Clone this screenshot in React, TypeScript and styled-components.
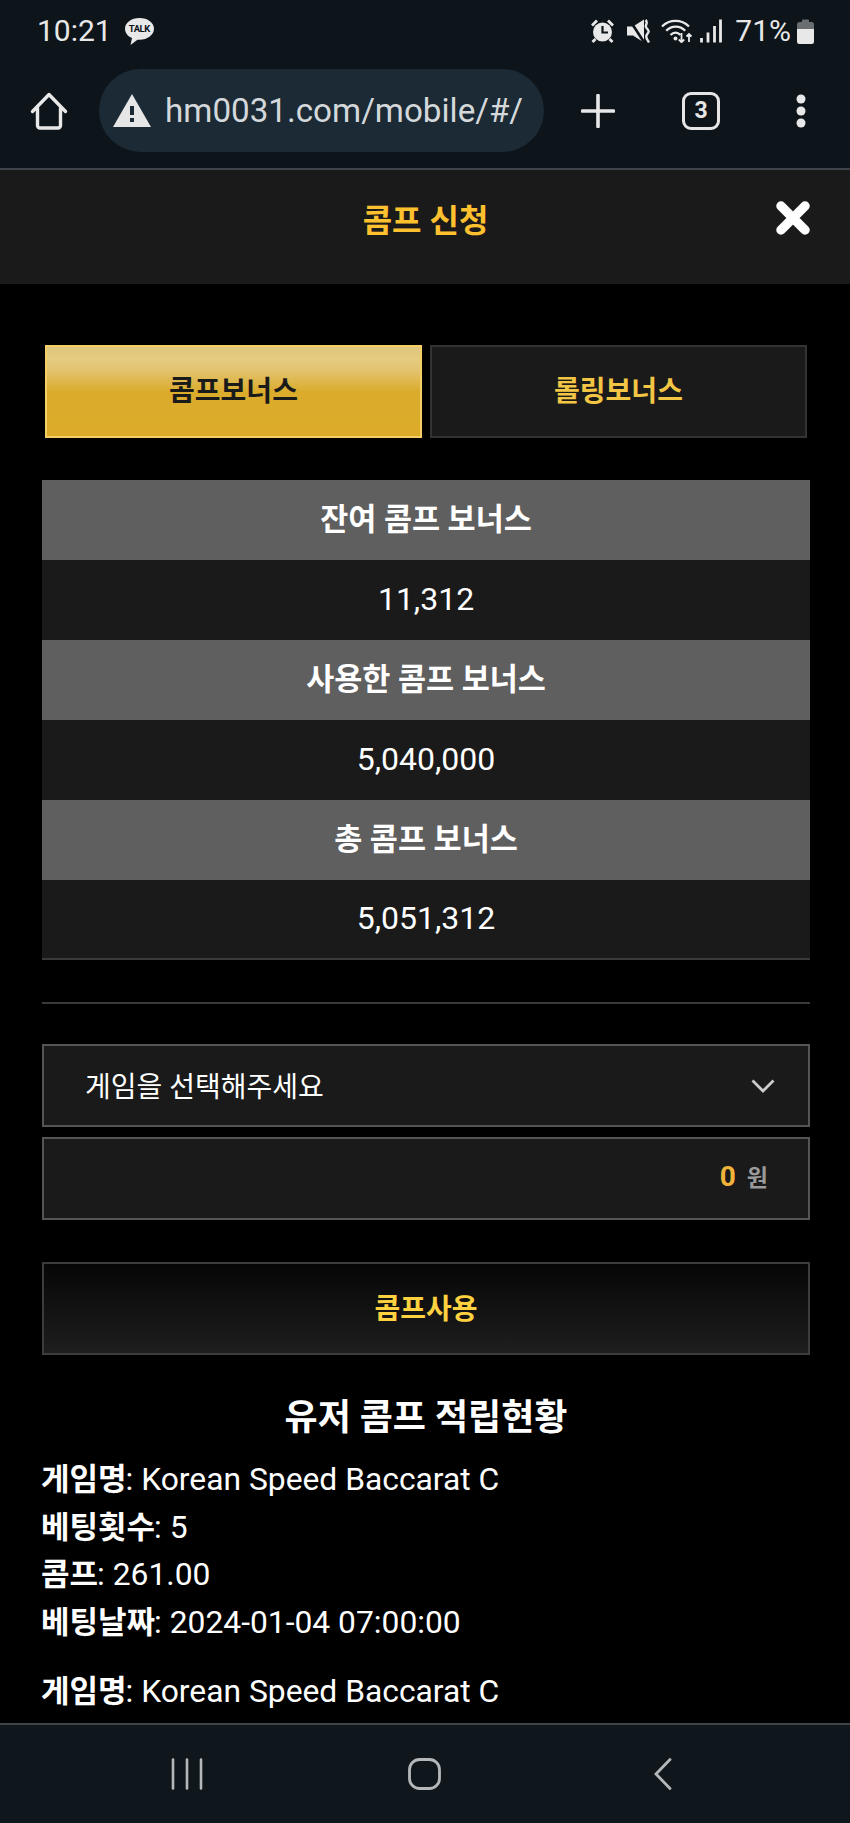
import React from 'react';
import styled, { createGlobalStyle } from 'styled-components';

const FONT = `Roboto, "Noto Sans CJK KR", "Noto Sans", sans-serif`;

const Global = createGlobalStyle`
  html, body { margin: 0; padding: 0; background: #000; }
  body { font-family: ${FONT}; }
  * { box-sizing: border-box; }
`;

const Page = styled.div`
  width: 850px;
  height: 1823px;
  display: flex;
  flex-direction: column;
  overflow: hidden;
  background: #000;
`;

const Chrome = styled.header`
  height: 170px;
  flex: none;
  background: #0d141a;
  border-bottom: 2px solid #3f444a;
  display: flex;
  flex-direction: column;
`;

const StatusBar = styled.div`
  height: 69px;
  padding: 10px 36px 0 37px;
  display: flex;
  align-items: flex-start;
  justify-content: space-between;
  color: #e8e8e8;
`;

const StatusGroup = styled.div`
  display: flex;
  align-items: center;
  height: 42px;
`;

const Clock = styled.span`
  font-size: 30px;
  line-height: 42px;
  margin-right: 12px;
`;

const TalkBubble = styled.span`
  position: relative;
  display: inline-block;
  width: 31px;
  height: 29px;
`;

const TalkLabel = styled.span`
  position: absolute;
  left: 0;
  right: 0;
  top: 6px;
  text-align: center;
  font-size: 9.500px;
  line-height: 11px;
  font-weight: 700;
  letter-spacing: -0.5px;
  color: #0d141a;
`;

const Battery = styled.span`
  font-size: 30px;
  line-height: 42px;
  margin: 0 6px 0 13px;
`;

const StatusIcon = styled.svg<{ $gap?: number }>`
  display: block;
  flex: none;
  margin-left: ${(p) => p.$gap ?? 0}px;
`;

const BrowserBar = styled.div`
  height: 83px;
  display: flex;
  align-items: center;
`;

const HomeSlot = styled.div`
  width: 99px;
  flex: none;
  display: flex;
  justify-content: center;
  padding-right: 1px;
`;

const UrlPill = styled.div`
  width: 445px;
  height: 83px;
  flex: none;
  border-radius: 42px;
  background: #1b2a35;
  display: flex;
  align-items: center;
  padding-left: 14px;
  gap: 14px;
`;

const UrlText = styled.span`
  font-size: 33.200px;
  line-height: 40px;
  color: #d4d8da;
  white-space: nowrap;
`;

const BrowserActions = styled.div`
  flex: 1;
  display: grid;
  grid-template-columns: 107px 100px 99px;
  justify-items: center;
  align-items: center;
`;

const TabCount = styled.span`
  width: 38px;
  height: 38px;
  border: 3.500px solid #e6e6e6;
  border-radius: 9px;
  display: flex;
  align-items: center;
  justify-content: center;
  font-size: 23px;
  font-weight: 700;
  color: #e6e6e6;
`;

const Main = styled.main`
  flex: 1;
  min-height: 0;
  overflow: hidden;
  background: #000;
`;

const ModalHeader = styled.div`
  position: relative;
  height: 114px;
  background: #1a1a1a;
  display: flex;
  justify-content: center;
  padding: 30px 0 0 1px;
`;

const ModalTitle = styled.h1`
  margin: 0;
  font-size: 32px;
  line-height: 42px;
  font-weight: 700;
  color: #fdc02f;
`;

const CloseButton = styled.svg`
  position: absolute;
  right: 39px;
  top: 30px;
`;

const Content = styled.div`
  padding: 61px 40px 0 42px;
`;

const Tabs = styled.div`
  display: grid;
  grid-template-columns: 377px 377px;
  gap: 8px;
  margin: 0 4px 0 3px;
`;

const Tab = styled.button<{ $active?: boolean }>`
  height: 93px;
  padding: 0 0 6px;
  font-family: ${FONT};
  font-size: 28px;
  font-weight: 700;
  border: 2px solid ${(p) => (p.$active ? '#f5cf66' : '#333333')};
  color: ${(p) => (p.$active ? '#1a1a1a' : '#f3c544')};
  background: ${(p) =>
    p.$active
      ? 'linear-gradient(to bottom, #dfc67e 0%, #e6cc80 14%, #e2c36f 26%, #dbac2c 50%, #dbab29 100%)'
      : '#1a1a1a'};
`;

const Summary = styled.section`
  margin-top: 42px;
`;

const SummaryHead = styled.div`
  height: 80px;
  padding-bottom: 7px;
  background: #5f5f5f;
  color: #fff;
  font-size: 30.500px;
  font-weight: 700;
  display: flex;
  align-items: center;
  justify-content: center;
`;

const SummaryValue = styled.div`
  height: 80px;
  padding-bottom: 3px;
  background: #1a1a1a;
  color: #fff;
  font-size: 32px;
  display: flex;
  align-items: center;
  justify-content: center;

  &:last-child {
    border-bottom: 2px solid #3a3a3a;
  }
`;

const Divider = styled.hr`
  margin: 42px 0 40px;
  border: 0;
  border-top: 2px solid #3a3a3a;
`;

const FieldBox = styled.div`
  height: 83px;
  background: #1a1a1a;
  border: 2px solid #555;
  display: flex;
  align-items: center;
`;

const SelectBox = styled(FieldBox)`
  justify-content: space-between;
  padding: 0 33px 0 41px;
  color: #fff;
  font-size: 28px;
`;

const SelectLabel = styled.span`
  margin-bottom: 2px;
`;

const AmountBox = styled(FieldBox)`
  margin-top: 10px;
  justify-content: flex-end;
  padding: 0 40px 5px 0;
  gap: 11px;
`;

const AmountValue = styled.span`
  font-size: 28px;
  font-weight: 700;
  color: #f0b43a;
`;

const AmountUnit = styled.span`
  font-size: 23px;
  font-weight: 700;
  color: #9a9a9a;
`;

const SubmitButton = styled.button`
  display: block;
  width: 100%;
  height: 93px;
  margin-top: 42px;
  padding: 0 0 4px;
  border: 2px solid #3c3c3c;
  background: linear-gradient(to bottom, #060606, #1e1e1e);
  color: #fdd13f;
  font-family: ${FONT};
  font-size: 28px;
  font-weight: 700;
`;

const HistoryTitle = styled.h2`
  margin: 39px 0 14px;
  text-align: center;
  font-size: 36px;
  line-height: 48px;
  font-weight: 700;
  color: #fff;
`;

const HistoryEntry = styled.div`
  margin-bottom: 21px;
  color: #fff;
  font-size: 31.800px;
  line-height: 47.700px;
`;

const HistoryLine = styled.div`
  height: 47.700px;
  margin-left: -1px;
  white-space: nowrap;
`;

const HistoryLabel = styled.b`
  font-size: 31px;
  font-weight: 700;
  margin-right: -1px;
`;

const NavBar = styled.nav`
  height: 100px;
  flex: none;
  background: #0f161c;
  border-top: 2px solid #3f444a;
  display: flex;
  align-items: flex-start;
  padding: 33px 0 0 171px;
`;

const NavIcon = styled.svg<{ $gap?: number }>`
  display: block;
  flex: none;
  margin-left: ${(p) => p.$gap ?? 0}px;
`;

const firstEntry = [
  ['게임명', 'Korean Speed Baccarat C'],
  ['베팅횟수', '5'],
  ['콤프', '261.00'],
  ['베팅날짜', '2024-01-04 07:00:00'],
];

const secondEntry = [['게임명', 'Korean Speed Baccarat C']];

const summary = [
  ['잔여 콤프 보너스', '11,312'],
  ['사용한 콤프 보너스', '5,040,000'],
  ['총 콤프 보너스', '5,051,312'],
];

export default function App() {
  return (
    <Page>
      <Global />
      <Chrome>
        <StatusBar>
          <StatusGroup>
            <Clock>10:21</Clock>
            <TalkBubble>
              <svg width="31" height="29" viewBox="0 0 31 29">
                <path d="M15.500 1C7.200 1 1 5.800 1 11.800c0 4.100 2.800 7.500 7 9.300L6.500 28l7-5.300c.7.100 1.300.1 2 .1C23.800 22.800 30 17.800 30 11.800S23.800 1 15.500 1z" fill="#e8e8e8" />
              </svg>
              <TalkLabel>TALK</TalkLabel>
            </TalkBubble>
          </StatusGroup>
          <StatusGroup>
            <StatusIcon width="23" height="24" viewBox="0 0 23 24">
              <circle cx="11.500" cy="13" r="9.500" fill="#e8e8e8" />
              <path d="M11.500 7v6.500h5.500" fill="none" stroke="#0d141a" strokeWidth="2.200" />
              <path d="M1 6.500L6 1.500M22 6.500l-5-5M4.500 20l-3 3M18.500 20l3 3" stroke="#e8e8e8" strokeWidth="2.800" />
            </StatusIcon>
            <StatusIcon $gap={13} width="23" height="24" viewBox="0 0 23 24">
              <path d="M0 7.500h6L17 .5v23L6 16.500H0z" fill="#e8e8e8" />
              <path d="M2 0l15.500 24" stroke="#0d141a" strokeWidth="2.600" />
              <path d="M18.500 1c3.500 3-1.500 5.500 1 8s3 3.500.500 6.500 1 5.500 2 8" fill="none" stroke="#e8e8e8" strokeWidth="2.400" />
            </StatusIcon>
            <StatusIcon $gap={11} width="32" height="24" viewBox="0 0 32 24">
              <path d="M1 7.500c7.500-7.500 19.500-7.500 27 0M5.200 11.800c5.500-5.500 13.600-5.500 19 0M9.500 16c3-3 7-3 10 0" fill="none" stroke="#e8e8e8" strokeWidth="2.300" />
              <circle cx="14.500" cy="19.500" r="2" fill="#e8e8e8" />
              <path d="M20.500 14v9M17.800 20.500l2.700 2.700 2.700-2.700M28 23v-8M25.500 17.500l2.500-2.500 2.500 2.500" fill="none" stroke="#e8e8e8" strokeWidth="1.800" />
            </StatusIcon>
            <StatusIcon $gap={7} width="22" height="24" viewBox="0 0 22 24">
              <path d="M1.500 19v4.500M8 13.500v10M14.500 7v16.500M20.500.5v23" stroke="#e8e8e8" strokeWidth="2.800" />
            </StatusIcon>
            <Battery>71%</Battery>
            <StatusIcon width="17" height="25" viewBox="0 0 17 25">
              <path d="M5 1.500a1 1 0 011-1h5a1 1 0 011 1V3h2.500A2.500 2.500 0 0117 5.500V10H0V5.500A2.500 2.500 0 012.500 3H5z" fill="#6a6e70" />
              <path d="M0 10h17v12.500a2.500 2.500 0 01-2.500 2.500h-12A2.500 2.500 0 010 22.500z" fill="#e8e8e8" />
            </StatusIcon>
          </StatusGroup>
        </StatusBar>
        <BrowserBar>
          <HomeSlot>
            <svg width="38" height="38" viewBox="0 0 38 38">
              <path d="M2.500 19.500L19 2.500l16.500 17M7.500 16v17.500a2.500 2.500 0 002.500 2.500h18a2.500 2.500 0 002.500-2.500V16" fill="none" stroke="#e8e8e8" strokeWidth="3.400" strokeLinecap="round" strokeLinejoin="round" />
            </svg>
          </HomeSlot>
          <UrlPill>
            <svg width="38" height="33" viewBox="0 0 38 33" style={{ flex: 'none' }}>
              <path d="M19 0l19 33H0z" fill="#e6e6e6" />
              <path d="M17 12h4v9h-4zM17 24h4v4h-4z" fill="#1b2a35" />
            </svg>
            <UrlText>hm0031.com/mobile/#/</UrlText>
          </UrlPill>
          <BrowserActions>
            <svg width="34" height="34" viewBox="0 0 34 34">
              <path d="M17 1.500v31M1.500 17h31" stroke="#e8e8e8" strokeWidth="3.600" strokeLinecap="round" />
            </svg>
            <TabCount>3</TabCount>
            <svg width="12" height="34" viewBox="0 0 12 34">
              <circle cx="6" cy="5" r="4.500" fill="#e8e8e8" />
              <circle cx="6" cy="17" r="4.500" fill="#e8e8e8" />
              <circle cx="6" cy="29" r="4.500" fill="#e8e8e8" />
            </svg>
          </BrowserActions>
        </BrowserBar>
      </Chrome>

      <Main>
        <ModalHeader>
          <ModalTitle>콤프 신청</ModalTitle>
          <CloseButton width="36" height="36" viewBox="0 0 36 36">
            <path d="M6 6l24 24M30 6L6 30" stroke="#fff" strokeWidth="9.500" strokeLinecap="round" />
          </CloseButton>
        </ModalHeader>
        <Content>
          <Tabs>
            <Tab $active>콤프보너스</Tab>
            <Tab>롤링보너스</Tab>
          </Tabs>
          <Summary>
            {summary.map(([head, value]) => (
              <React.Fragment key={head}>
                <SummaryHead>{head}</SummaryHead>
                <SummaryValue>{value}</SummaryValue>
              </React.Fragment>
            ))}
          </Summary>
          <Divider />
          <SelectBox>
            <SelectLabel>게임을 선택해주세요</SelectLabel>
            <svg width="24" height="14" viewBox="0 0 24 14">
              <path d="M1.500 1.500L12 12 22.500 1.500" fill="none" stroke="#ccc" strokeWidth="2.800" />
            </svg>
          </SelectBox>
          <AmountBox>
            <AmountValue>0</AmountValue>
            <AmountUnit>원</AmountUnit>
          </AmountBox>
          <SubmitButton>콤프사용</SubmitButton>
          <HistoryTitle>유저 콤프 적립현황</HistoryTitle>
          {[firstEntry, secondEntry].map((entry, i) => (
            <HistoryEntry key={i}>
              {entry.map(([label, value]) => (
                <HistoryLine key={label}>
                  <HistoryLabel>{label}</HistoryLabel>: {value}
                </HistoryLine>
              ))}
            </HistoryEntry>
          ))}
        </Content>
      </Main>

      <NavBar>
        <NavIcon width="32" height="32" viewBox="0 0 32 32">
          <path d="M2 1.500v29M16 1.500v29M30 1.500v29" stroke="#b4b8ba" strokeWidth="2.600" strokeLinecap="round" />
        </NavIcon>
        <NavIcon $gap={205} width="33" height="32" viewBox="0 0 33 32">
          <rect x="1.500" y="1.500" width="30" height="29" rx="10" fill="none" stroke="#b4b8ba" strokeWidth="2.800" />
        </NavIcon>
        <NavIcon $gap={213} width="18" height="32" viewBox="0 0 18 32">
          <path d="M16 1.500L2 16l14 14.500" fill="none" stroke="#b4b8ba" strokeWidth="2.800" strokeLinecap="round" />
        </NavIcon>
      </NavBar>
    </Page>
  );
}
